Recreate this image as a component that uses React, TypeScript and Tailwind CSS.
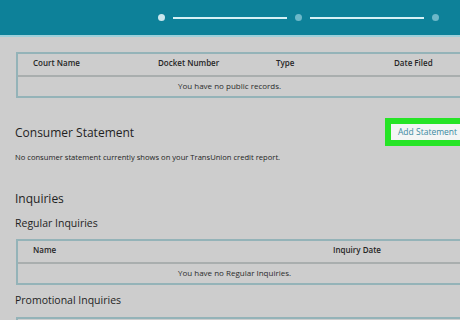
import React from "react";

const ProgressDots = () => (
  <div className="flex items-center gap-2 pl-[158px] h-full">
    <span className="w-[7px] h-[7px] rounded-full bg-[#c9e7ee]" />
    <span className="w-[114px] h-[2px] bg-[#d6f0f5]" />
    <span className="w-[7px] h-[7px] rounded-full bg-[#6cb8c9]" />
    <span className="w-[114px] h-[2px] bg-[#d6f0f5]" />
    <span className="w-[7px] h-[7px] rounded-full bg-[#6cb8c9]" />
  </div>
);

function Table({ cols, empty }: { cols: { label: string; w: string }[]; empty: string }) {
  return (
    <div className="ml-4 w-[480px] border-2 border-[#94b3b8]">
      <div className="flex items-center h-[23px] pb-[3px] pl-[15px] border-b-2 border-[#a9aeae] font-semibold text-[#262626]">
        {cols.map(c => (
          <div key={c.label} className={c.w}>{c.label}</div>
        ))}
      </div>
      <div className="flex items-center h-[19px] pb-[1px] pl-[160px] text-[#2b2b2b]">{empty}</div>
    </div>
  );
}

export default function App() {
  return (
    <div className="w-[460px] h-[320px] overflow-hidden bg-[#cdcdcd] font-['Open_Sans',sans-serif] text-[8px] leading-[12px]">
      {/* top bar with step indicator */}
      <header className="h-[35px] bg-[#0d8199]">
        <ProgressDots />
      </header>
      <div className="h-[2px] bg-[#9dd0da]" />

      <div className="mt-[15px]">
        <Table
          empty="You have no public records."
          cols={[
            { label: "Court Name", w: "w-[125px]" },
            { label: "Docket Number", w: "w-[118px]" },
            { label: "Type", w: "w-[118px]" },
            { label: "Date Filed", w: "w-[100px]" },
          ]}
        />
      </div>

      {/* consumer statement */}
      <div className="mt-[20px] flex items-center justify-between h-[28px] pl-[15px]">
        <h2 className="text-[12px] leading-[18px] text-[#1f1f1f] pt-[1px]">Consumer Statement</h2>
        <div className="-mr-[8px] w-[83px] h-[28px] border-[6px] border-[#26e426] bg-[#f3f5f5] flex items-center pl-[7px] text-[8.5px] text-[#3a8aa1]">
          Add Statement
        </div>
      </div>
      <p className="mt-[5px] pl-[15px] text-[7.6px] text-[#1e1e1e]">
        No consumer statement currently shows on your TransUnion credit report.
      </p>

      {/* inquiries */}
      <h2 className="mt-[27px] pl-[15px] text-[12px] leading-[18px] text-[#1f1f1f]">Inquiries</h2>
      <h3 className="mt-[7px] pl-[15px] text-[10.5px] leading-[16px] text-[#1f1f1f]">Regular Inquiries</h3>
      <div className="mt-[8px]">
        <Table
          empty="You have no Regular Inquiries."
          cols={[
            { label: "Name", w: "w-[300px]" },
            { label: "Inquiry Date", w: "w-[100px]" },
          ]}
        />
      </div>
      <h3 className="mt-[7px] pl-[15px] text-[10.5px] leading-[16px] text-[#1f1f1f]">Promotional Inquiries</h3>
      <div className="mt-[9px] ml-4 w-[480px] h-[30px] border-2 border-[#94b3b8]" />
    </div>
  );
}
